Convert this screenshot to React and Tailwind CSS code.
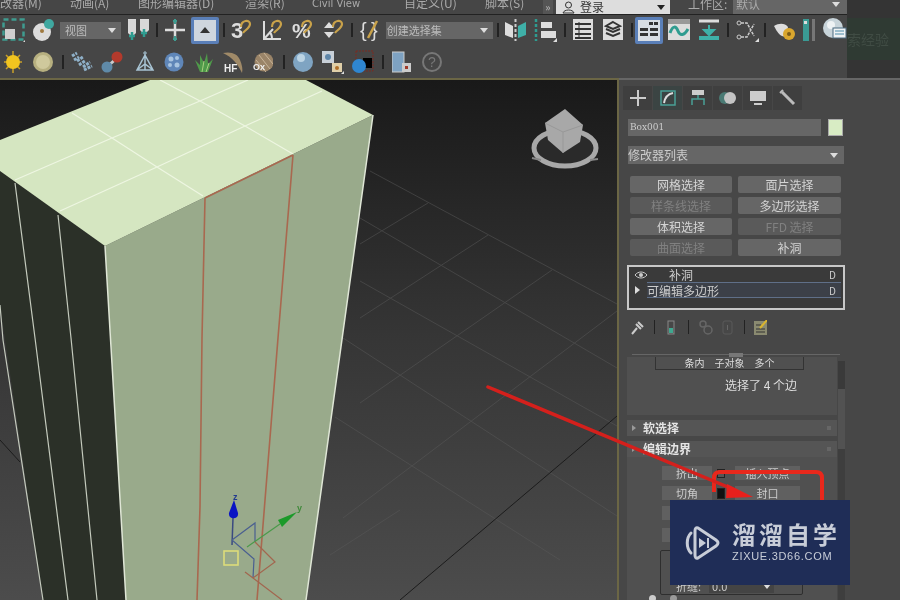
import React from 'react';

const Ico = ({ className = '', w = 22, h = 24, children }) => (
  <svg className={`shrink-0 ${className}`} width={w} height={h} viewBox={`0 0 ${w} ${h}`} fill="none">
    {children}
  </svg>
);

const Sep = ({ className = '' }) => <div className={`h-[14px] w-[2px] shrink-0 bg-[#222] ${className}`} />;

// small white corner shown on flyout buttons
const Fly = ({ x, y }) => <polygon points={`${x},${y} ${x},${y - 4} ${x - 4},${y}`} fill="#ddd" />;

const Magnet = ({ x = 12 }) => (
  <path d={`M${x} 9 C${x} 2 ${x + 9} 1 ${x + 9} 6 C${x + 9} 10 ${x + 4} 12 ${x + 2} 15`} stroke="#c9a24a" strokeWidth="2.2" />
);

const Arrow = ({ className = '' }) => <div className={`h-0 w-0 border-x-[4px] border-t-[5px] border-x-transparent border-t-[#ddd] ${className}`} />;

const ToolbarTop = () => (
  <div className="flex h-[30px] items-center">
    <Ico className="ml-[2px]" w={23}>
      <rect x="1.5" y="1.5" width="20" height="20" stroke="#3f9c90" strokeWidth="2.5" strokeDasharray="5 3" />
      <rect x="3" y="11" width="10" height="10" fill="#cfcfcf" />
      <Fly x={25} y={24} />
    </Ico>
    <Ico className="ml-[7px]" w={23}>
      <circle cx="10" cy="14" r="9" fill="#dcdcdc" />
      <circle cx="17" cy="6" r="5" fill="#3fa8a0" />
      <circle cx="10" cy="13" r="2" fill="#a07a40" />
    </Ico>
    <div className="ml-[5px] flex h-[17px] w-[63px] items-center justify-between bg-[#666] pl-[5px] pr-[5px] text-[11px] text-[#bbb]">
      <span>视图</span>
      <Arrow />
    </div>
    <Ico className="ml-[6px]" w={23}>
      <path d="M1 1H9V15L5 19L1 15Z" fill="#d8d8d8" />
      <path d="M13 1H22V12L17 17L13 12Z" fill="#d8d8d8" />
      <path d="M5 14V22M2 18H8M17 11V19M14 15H20" stroke="#2f9c90" strokeWidth="2.5" />
    </Ico>
    <Sep className="ml-[6px]" />
    <Ico className="ml-[6px]">
      <path d="M11 3V21M1 12H21" stroke="#ddd" strokeWidth="2.5" />
      <path d="M11 1V6M9 3H13M11 18V23M9 21H13" stroke="#3f9c90" strokeWidth="2" />
    </Ico>
    <div className="ml-[5px] flex h-[27px] w-[28px] shrink-0 items-center justify-center rounded-[2px] border-[3px] border-[#5a7fb8] bg-[#cfd6de]">
      <div className="h-0 w-0 border-x-[5px] border-b-[6px] border-x-transparent border-b-[#333]" />
    </div>
    <Sep className="ml-[4px]" />
    <Ico className="ml-[6px]">
      <text x="0" y="20" fontSize="22" fontWeight="700" fill="#ddd" fontFamily="Liberation Sans">3</text>
      <Magnet x={10} />
    </Ico>
    <Ico className="ml-[9px]" w={21}>
      <path d="M2 3V21H19M2 21L11 11M10 21C10 17 9 15 7 14" stroke="#ddd" strokeWidth="2" />
      <Magnet x={10} />
    </Ico>
    <Ico className="ml-[9px]">
      <text x="0" y="20" fontSize="21" fontWeight="700" fill="#ddd" fontFamily="Liberation Sans">%</text>
      <Magnet x={10} />
    </Ico>
    <Ico className="ml-[9px]">
      <path d="M1 10L6 4L11 10ZM1 14L6 20L11 14Z" fill="#ddd" />
      <Magnet x={10} />
    </Ico>
    <Sep className="ml-[6px]" />
    <Ico className="ml-[7px]" w={19}>
      <text x="0" y="19" fontSize="20" fill="#ddd" fontFamily="Liberation Sans">{'{'}</text>
      <text x="11" y="19" fontSize="20" fill="#ddd" fontFamily="Liberation Sans">{'}'}</text>
      <path d="M8 20L17 3" stroke="#c9a24a" strokeWidth="2.5" />
    </Ico>
    <div className="ml-[7px] flex h-[17px] w-[112px] items-center justify-between bg-[#666] pl-[1px] pr-[5px] text-[11px] text-[#bbb]">
      <span>创建选择集</span>
      <Arrow />
    </div>
    <Sep className="ml-[4px]" />
    <Ico className="ml-[5px]" w={23}>
      <path d="M1 4L9 8V20L1 17Z" fill="#ddd" />
      <path d="M14 8L22 4V17L14 20Z" fill="#3fb0a8" />
      <path d="M11.5 1V23" stroke="#ccc" strokeWidth="2" strokeDasharray="3 2" />
    </Ico>
    <Ico className="ml-[7px]" w={23}>
      <path d="M2 1V23" stroke="#2f9c90" strokeWidth="2.5" strokeDasharray="3 2" />
      <rect x="7" y="4" width="11" height="6" fill="#ddd" />
      <rect x="7" y="13" width="15" height="7" fill="#ddd" />
      <Fly x={23} y={24} />
    </Ico>
    <Sep className="ml-[7px]" />
    <Ico className="ml-[7px]" w={20}>
      <rect x="0" y="1" width="20" height="21" fill="#ddd" />
      <path d="M2 6H18M2 11H18M2 16H18M2 20H18" stroke="#333" strokeWidth="2" />
      <path d="M6 4V21" stroke="#333" strokeWidth="1" />
    </Ico>
    <Ico className="ml-[10px]" w={20}>
      <rect x="0" y="1" width="20" height="21" fill="#ddd" />
      <path d="M10 4L17 8L10 11L3 8ZM3 11L10 14L17 11M3 15L10 18L17 15" stroke="#333" strokeWidth="2" />
    </Ico>
    <Sep className="ml-[8px]" />
    <div className="ml-[2px] flex h-[27px] w-[28px] shrink-0 flex-col rounded-[2px] border-[3px] border-[#5a7fb8] bg-[#d8dde3] p-[2px]">
      <div className="flex justify-end gap-[1px]">
        <div className="h-[3px] w-[4px] bg-[#333]" />
        <div className="h-[3px] w-[4px] bg-[#333]" />
      </div>
      <div className="mt-[3px] grid grid-cols-2 gap-[2px]">
        <div className="h-[3px] bg-[#333]" />
        <div className="h-[3px] bg-[#333]" />
        <div className="h-[3px] bg-[#333]" />
        <div className="h-[3px] bg-[#333]" />
      </div>
    </div>
    <Ico className="ml-[5px]">
      <rect x="0" y="1" width="22" height="21" fill="#ddd" />
      <rect x="0" y="1" width="22" height="5" fill="#999" />
      <path d="M2 15C5 7 8 8 10 13C12 18 16 18 20 11" stroke="#2f9c90" strokeWidth="3" />
    </Ico>
    <Ico className="ml-[8px]">
      <path d="M1 3H21" stroke="#ddd" strokeWidth="3" />
      <path d="M1 20H21" stroke="#3fb0a8" strokeWidth="4" />
      <path d="M11 7V14M6 12H16L11 17Z" fill="#3fb0a8" stroke="#3fb0a8" strokeWidth="2" />
    </Ico>
    <Sep className="ml-[7px]" />
    <Ico className="ml-[7px]" w={23}>
      <circle cx="3" cy="5" r="2" stroke="#ccc" />
      <circle cx="3" cy="19" r="2" stroke="#ccc" />
      <path d="M5 5H11L18 18M5 19H11L18 6" stroke="#ccc" strokeWidth="1.5" strokeDasharray="3 1" />
      <Fly x={23} y={24} />
    </Ico>
    <Sep className="ml-[5px]" />
    <Ico className="ml-[7px]">
      <path d="M1 8C6 5 12 5 15 9L13 18C9 20 5 16 1 8Z" fill="#ddd" />
      <circle cx="16" cy="16" r="6" fill="#d9a62e" />
      <circle cx="16" cy="16" r="2" fill="#7a5c18" />
    </Ico>
    <Ico className="ml-[8px]" w={12}>
      <rect x="0" y="1" width="6" height="22" fill="#3a9a94" />
      <rect x="9" y="1" width="3" height="22" fill="#777" />
      <rect x="1" y="3" width="3" height="3" fill="#ddd" />
    </Ico>
    <Ico className="ml-[7px]" w={25} h={26}>
      <circle cx="11" cy="11" r="10" fill="#c8d4da" />
      <circle cx="9" cy="8" r="4" fill="#eef2f4" />
      <rect x="11" y="11" width="13" height="10" fill="#eef2f4" stroke="#4a6a80" />
      <path d="M13 14H22M13 17H22" stroke="#4a8aa8" />
    </Ico>
  </div>
);

const ToolbarBottom = () => (
  <div className="flex h-[33px] items-center">
    <Ico className="ml-[3px]" w={20}>
      <path d="M10 1V23M1 12H19M3 5L17 19M17 5L3 19" stroke="#c9a02a" strokeWidth="1.5" />
      <circle cx="10" cy="12" r="7" fill="#f1c41f" />
    </Ico>
    <Ico className="ml-[10px]" w={20}>
      <circle cx="10" cy="12" r="10" fill="#b7b080" />
      <circle cx="10" cy="12" r="7" fill="#cfc99c" />
    </Ico>
    <Sep className="ml-[9px]" />
    <Ico className="ml-[7px]">
      <path d="M1 6L6 3M6 11L12 7M12 17L19 12M3 10L8 7M8 15L14 11M13 20L21 16" stroke="#8fb0c8" strokeWidth="3" strokeDasharray="3 1" />
    </Ico>
    <Ico className="ml-[8px]">
      <path d="M7 16L16 8" stroke="#ccc" strokeWidth="3" />
      <circle cx="6" cy="17" r="5.5" fill="#5f8aa8" />
      <circle cx="16" cy="7" r="5.5" fill="#b33a2c" />
    </Ico>
    <Ico className="ml-[11px]">
      <path d="M11 5L3 20H19ZM11 5V20M3 20L11 14L19 20" stroke="#a8c4d4" strokeWidth="1.5" />
      <path d="M11 1V5M9 3H13" stroke="#a8c4d4" />
    </Ico>
    <Ico className="ml-[8px]" w={20}>
      <circle cx="10" cy="12" r="9.5" fill="#5f86b8" />
      <circle cx="7" cy="9" r="2.5" fill="#a8c4e0" />
      <circle cx="13" cy="8" r="2" fill="#a8c4e0" />
      <circle cx="13" cy="15" r="2.5" fill="#a8c4e0" />
      <circle cx="6" cy="15" r="2" fill="#a8c4e0" />
    </Ico>
    <Ico className="ml-[10px]" w={20}>
      <path d="M1 10L6 22H14L19 9L14 14L13 3L10 13L6 5L6 15Z" fill="#4f9a4a" />
      <path d="M8 22L10 11M12 22L15 13" stroke="#a8d080" />
    </Ico>
    <Ico className="ml-[9px]" w={21}>
      <path d="M0 3C8 1 15 4 17 10C19 15 20 19 19 23C15 14 9 7 0 3Z" fill="#a08a68" />
      <text x="1" y="22" fontSize="10" fontWeight="700" fill="#eee" fontFamily="Liberation Sans">HF</text>
    </Ico>
    <Ico className="ml-[9px]" w={20}>
      <circle cx="11" cy="12" r="9.5" fill="#9a8468" />
      <path d="M6 5L17 19M3 10L13 22M11 3L20 14" stroke="#c8b498" />
      <text x="0" y="20" fontSize="9" fontWeight="700" fill="#eee" fontFamily="Liberation Sans">Ox</text>
    </Ico>
    <Sep className="ml-[10px]" />
    <Ico className="ml-[8px]" w={20}>
      <circle cx="10" cy="12" r="10" fill="#7fa4c2" />
      <circle cx="8" cy="8" r="4" fill="#bcd4e4" />
    </Ico>
    <Ico className="ml-[9px]">
      <rect x="0" y="1" width="12" height="12" fill="#c8d0d8" />
      <circle cx="6" cy="7" r="3" fill="#5f86a8" />
      <rect x="10" y="13" width="10" height="9" fill="#e0cfa8" />
      <circle cx="15" cy="18" r="2" fill="#b0702a" />
      <Fly x={23} y={24} />
    </Ico>
    <Ico className="ml-[8px]">
      <rect x="4" y="1" width="17" height="20" stroke="#7a2a20" strokeDasharray="2 1" />
      <rect x="11" y="8" width="9" height="10" fill="#000" />
      <circle cx="7" cy="16" r="7" fill="#2f86d0" />
    </Ico>
    <Sep className="ml-[8px]" />
    <Ico className="ml-[8px]" w={20}>
      <rect x="0" y="2" width="12" height="20" fill="#7ea2c2" stroke="#ccc" />
      <rect x="10" y="13" width="9" height="9" fill="#ccc" />
      <rect x="13" y="16" width="3" height="3" fill="#a03a2a" />
    </Ico>
    <Ico className="ml-[10px]" w={20}>
      <circle cx="10" cy="12" r="9" stroke="#777" strokeWidth="2" />
      <text x="6" y="17" fontSize="14" fill="#777" fontFamily="Liberation Sans">?</text>
    </Ico>
  </div>
);

const Menu = () => (
  <div className="flex h-[15px] items-start overflow-hidden border-b border-[#222] text-[12px] leading-[12px] text-[#aaa]">
    <span className="-mt-[3px] w-[70px] shrink-0">改器(M)</span>
    <span className="-mt-[3px] w-[68px] shrink-0">动画(A)</span>
    <span className="-mt-[3px] w-[107px] shrink-0">图形编辑器(D)</span>
    <span className="-mt-[3px] w-[67px] shrink-0">渲染(R)</span>
    <span className="-mt-[2px] w-[92px] shrink-0 font-['DejaVu_Sans',sans-serif] text-[10px]">Civil View</span>
    <span className="-mt-[3px] w-[81px] shrink-0">自定义(U)</span>
    <span className="-mt-[3px] w-[58px] shrink-0">脚本(S)</span>
    <div className="flex h-[14px] w-[10px] shrink-0 items-center justify-center bg-[#555] text-[10px] font-bold">»</div>
    <div className="ml-[3px] flex h-[14px] w-[114px] shrink-0 items-center bg-[#ddd] pl-[6px] text-[#333]">
      <Ico w={13} h={13}>
        <circle cx="6.5" cy="4" r="3" stroke="#333" />
        <path d="M1 12C2 8 11 8 12 12Z" stroke="#333" />
      </Ico>
      <span className="ml-[5px]">登录</span>
      <div className="ml-auto mr-[5px] h-0 w-0 border-x-[4px] border-t-[5px] border-x-transparent border-t-[#222]" />
    </div>
    <span className="-mt-[2px] ml-[18px] w-[45px] shrink-0">工作区:</span>
    <div className="flex h-[14px] w-[114px] shrink-0 items-start justify-between bg-[#666] pl-[3px] pr-[7px]">
      <span className="-mt-[2px]">默认</span>
      <Arrow className="mt-[2px]" />
    </div>
  </div>
);

const Viewport = () => (
  <div className="h-[522px] w-[619px] shrink-0 border-r-2 border-t-2 border-[#6b6645]">
    <svg className="block" width="617" height="520" viewBox="0 80 617 520" fill="none">
      <defs>
        <linearGradient id="bg" x1="0" y1="0" x2="0" y2="1">
          <stop offset="0" stopColor="#191919" />
          <stop offset="0.5" stopColor="#363636" />
          <stop offset="1" stopColor="#4c4c4c" />
        </linearGradient>
      </defs>
      <rect x="0" y="80" width="617" height="520" fill="url(#bg)" />

      {/* grid */}
      <g stroke="#5a5a5a" strokeWidth="1" opacity="0.5">
        <path d="M370 171L617 304M360 218L617 368M360 281L617 426M343 338L617 516M335 417L560 560" />
        <path d="M360 244L428 203M360 318L488 235M360 403L552 270M343 518L617 311M330 555L400 510" />
      </g>
      <path d="M400 600L617 416M0 440L20 462" stroke="#1c1c1c" strokeWidth="1" />

      {/* box */}
      <polygon points="0,171 105,246 126,600 43,600 0,305" fill="#2b3028" />
      <path d="M0 305L3 340L43 600M15 183L35 338L68 600M58 215L71 338L97 600" stroke="#c4cabd" strokeWidth="1.2" />
      <polygon points="105,246 373,115 306,600 126,600" fill="#99aa8b" />
      <polygon points="0,140 150,80 306,80 373,115 105,246 0,171" fill="#d5e6c1" />
      <path d="M15 180L112 138L200 101L248 80M60 211L157 167L245 126L322 91M72 113L112 138L157 167L203 196M160 80L200 101L245 126L293 154" stroke="#eef6e2" strokeWidth="1.2" />
      <path d="M105 246L126 600M373 115L306 600" stroke="#dfe6d6" strokeWidth="1.5" />
      <path d="M205 198L202 338L200 507L197 600M293 155L278 338L257 600M205 198L293 155" stroke="#a9684f" strokeWidth="1.6" />

      {/* gizmo */}
      <path d="M233 518L232 545" stroke="#3a4a80" strokeWidth="1.5" />
      <path d="M234 500L229 513C228 520 239 520 238 513Z" fill="#0a14c4" />
      <text x="233" y="500" fontSize="9" fontWeight="700" fill="#223a90" fontFamily="Liberation Sans">z</text>
      <path d="M232 540L255 523V542M232 540L254 559L253 578" stroke="#4a5f90" strokeWidth="1.2" />
      <path d="M247 547L280 524" stroke="#4a9a4a" strokeWidth="1.2" />
      <polygon points="297,512 278,520 282,527" fill="#1c9a2a" />
      <text x="297" y="511" fontSize="9" fontWeight="700" fill="#3f8a3a" fontFamily="Liberation Sans">y</text>
      <path d="M255 542L275 562L253 578L245 572M253 578L282 600" stroke="#a2664f" strokeWidth="1.2" />
      <rect x="224" y="551" width="14" height="14" stroke="#dcdc7a" strokeWidth="1.6" />

      {/* view cube */}
      <ellipse cx="565" cy="148" rx="31" ry="18" stroke="#a8a8a8" strokeWidth="5" fill="#2a2a2a" />
      <path d="M532 158L541 160M590 160L598 159" stroke="#888" strokeWidth="2" />
      <polygon points="565,109 583,125 580,142 563,153 548,140 545,123" fill="#a8a8a8" />
      <path d="M545 123L563 132L583 125M563 132V153" stroke="#989898" />
    </svg>
  </div>
);

const btnRows = [
  ['网格选择', false],
  ['面片选择', false],
  ['样条线选择', true],
  ['多边形选择', false],
  ['体积选择', false],
  ['FFD 选择', true],
  ['曲面选择', true],
  ['补洞', false],
];

const Tabs = () => (
  <div className="ml-[4px] mt-[6px] flex h-[24px] gap-[1px]">
    <div className="flex w-[29px] items-center justify-center bg-[#3f3f3f]">
      <Ico w={18} h={18}><path d="M9 1V17M1 9H17" stroke="#ccc" strokeWidth="2" /></Ico>
    </div>
    <div className="flex w-[29px] items-center justify-center bg-[#3b4443]">
      <Ico w={18} h={18}>
        <rect x="2" y="2" width="14" height="14" stroke="#4aa096" strokeWidth="1.5" />
        <path d="M5 14C6 8 9 5 14 4" stroke="#ddd" strokeWidth="2" />
      </Ico>
    </div>
    <div className="flex w-[29px] items-center justify-center bg-[#3f3f3f]">
      <Ico w={18} h={18}>
        <rect x="3" y="1" width="12" height="5" fill="#ccc" />
        <path d="M9 6V10M3 16V10H15V16" stroke="#4aa096" strokeWidth="1.5" />
      </Ico>
    </div>
    <div className="flex w-[29px] items-center justify-center bg-[#3f3f3f]">
      <Ico w={20} h={16}>
        <circle cx="7" cy="8" r="6" fill="#4a7a74" />
        <circle cx="12" cy="8" r="6" fill="#c4c4c4" />
      </Ico>
    </div>
    <div className="flex w-[29px] items-center justify-center bg-[#3f3f3f]">
      <Ico w={18} h={16}>
        <rect x="1" y="1" width="16" height="10" fill="#ccc" />
        <path d="M5 14H13" stroke="#ccc" strokeWidth="2" />
      </Ico>
    </div>
    <div className="flex w-[29px] items-center justify-center bg-[#3f3f3f]">
      <Ico w={18} h={18}>
        <path d="M3 3L15 15" stroke="#bbb" strokeWidth="3" />
        <path d="M1 4L4 1" stroke="#bbb" strokeWidth="2" />
      </Ico>
    </div>
  </div>
);

const Stack = () => (
  <div className="ml-[8px] mt-[9px] h-[45px] w-[218px] border-2 border-[#c8c8c8] bg-[#3a3a3a] text-[12px] leading-[15px] text-[#ccc]">
    <div className="flex h-[15px] items-center">
      <Ico className="ml-[5px]" w={14} h={10}>
        <path d="M1 5C4 1 10 1 13 5C10 9 4 9 1 5Z" stroke="#ccc" />
        <circle cx="7" cy="5" r="2" fill="#ccc" />
      </Ico>
      <span className="ml-[21px]">补洞</span>
      <span className="ml-auto mr-[7px] text-[10px]">D</span>
    </div>
    <div className="flex h-[16px] items-center">
      <div className="ml-[6px] h-0 w-0 border-y-[4px] border-l-[5px] border-y-transparent border-l-[#ddd]" />
      <div className="ml-[7px] mr-[2px] flex h-[16px] flex-1 items-center border-y border-[#5f6f88] bg-[#3c4048] pr-[5px]">
        <span>可编辑多边形</span>
        <span className="ml-auto text-[10px]">D</span>
      </div>
    </div>
  </div>
);

const StackTools = () => (
  <div className="ml-[12px] mt-[9px] flex h-[16px] items-center">
    <Ico w={14} h={15}>
      <path d="M1 14L6 8M5 4L10 9M7 2L12 7" stroke="#ccc" strokeWidth="2" />
    </Ico>
    <Sep className="ml-[9px] !w-[1px]" />
    <Ico className="ml-[12px]" w={8} h={15}>
      <rect x="1" y="1" width="6" height="13" stroke="#888" />
      <rect x="2" y="8" width="4" height="5" fill="#3fa890" />
    </Ico>
    <Sep className="ml-[13px] !w-[1px]" />
    <Ico className="ml-[9px]" w={15} h={15}>
      <circle cx="5" cy="4" r="3" stroke="#666" strokeWidth="1.5" />
      <circle cx="10" cy="10" r="4" stroke="#666" strokeWidth="1.5" />
    </Ico>
    <Ico className="ml-[9px]" w={11} h={15}>
      <rect x="1" y="1" width="9" height="13" rx="2" stroke="#5a5a5a" />
      <path d="M5.5 5V10" stroke="#666" />
    </Ico>
    <Sep className="ml-[11px] !w-[1px]" />
    <Ico className="ml-[9px]" w={13} h={15}>
      <rect x="0" y="1" width="13" height="14" fill="#8a8a70" />
      <path d="M2 5H7M2 9H11M2 12H11" stroke="#333" />
      <path d="M6 8L13 0" stroke="#d9b52e" strokeWidth="2" />
    </Ico>
  </div>
);

const Header = ({ label, className = '' }) => (
  <div className={`flex h-[16px] shrink-0 items-center bg-[#555] text-[12px] font-bold text-[#e4e4e4] ${className}`}>
    <div className="ml-[5px] h-0 w-0 border-y-[3px] border-l-[4px] border-y-transparent border-l-[#999]" />
    <span className="ml-[7px]">{label}</span>
    <div className="ml-auto mr-[6px] h-[4px] w-[4px] bg-[#666]" />
  </div>
);

const SmallBtn = ({ label, className = '' }) => (
  <div className={`flex h-[14px] items-center justify-center overflow-hidden bg-[#606060] text-[11px] text-[#ccc] ${className}`}>{label}</div>
);

const Rollouts = () => (
  <div className="flex min-h-0 flex-1">
    <div className="ml-[8px] flex w-[210px] shrink-0 flex-col">
      <div className="h-[58px] shrink-0 overflow-hidden bg-[#505050] text-[11px] text-[#ddd]">
        <div className="ml-[28px] flex h-[13px] w-[149px] items-end justify-center gap-[10px] overflow-hidden border-x border-b border-[#333] text-[10px] leading-[10px]">
          <span className="mb-[1px]">条内</span>
          <span className="mb-[1px]">子对象</span>
          <span className="mb-[1px]">多个</span>
        </div>
        <div className="ml-[98px] mt-[6px] text-[12px]">选择了 4 个边</div>
      </div>
      <Header label="软选择" className="mt-[5px]" />
      <Header label="编辑边界" className="mt-[5px]" />
      <div className="min-h-0 flex-1 bg-[#505050] pt-[9px]">
        <div className="flex items-center">
          <SmallBtn label="挤出" className="ml-[35px] w-[50px]" />
          <div className="ml-[5px] h-[9px] w-[8px] border border-[#222] bg-[#555]" />
          <SmallBtn label="插入顶点" className="ml-[10px] w-[65px]" />
        </div>
        <div className="mt-[6px] flex items-center">
          <SmallBtn label="切角" className="ml-[35px] w-[50px]" />
          <div className="ml-[5px] h-[11px] w-[8px] border border-[#222] bg-[#111]" />
          <SmallBtn label="封口" className="ml-[10px] w-[65px]" />
        </div>
        <SmallBtn label="" className="ml-[35px] mt-[6px] w-[50px]" />
        <SmallBtn label="" className="ml-[35px] mt-[8px] w-[50px]" />
        <div className="ml-[33px] mt-[8px] h-[45px] w-[143px] rounded-[2px] border border-[#2e2e2e]">
          <div className="ml-[15px] mt-[27px] flex items-center text-[11px] text-[#ccc]">
            <span>折缝:</span>
            <div className="ml-[8px] flex h-[13px] w-[65px] items-center justify-between bg-[#444] px-[3px]">
              <span>0.0</span>
              <Arrow />
            </div>
          </div>
        </div>
        <div className="ml-[22px] flex gap-[14px]">
          <div className="h-[7px] w-[7px] rounded-full bg-[#ccc]" />
          <div className="h-[7px] w-[7px] rounded-full bg-[#999]" />
        </div>
      </div>
    </div>
    <div className="ml-[1px] flex w-[7px] flex-col">
      <div className="mt-[4px] h-[28px] bg-[#3a3a3a]" />
      <div className="h-[60px] bg-[#525252]" />
      <div className="flex-1 bg-[#3e3e3e]" />
    </div>
  </div>
);

const Panel = () => (
  <div className="flex h-[522px] flex-1 flex-col border-t-2 border-[#666] bg-[#474747] font-['Noto_Sans_CJK_SC',sans-serif]">
    <Tabs />
    <div className="ml-[9px] mt-[9px] flex">
      <div className="flex h-[17px] w-[193px] items-center bg-[#666] pl-[2px] font-['DejaVu_Serif',serif] text-[9px] text-[#ccc]">Box001</div>
      <div className="ml-[7px] h-[17px] w-[15px] border border-[#aaa] bg-[#d8ecc4]" />
    </div>
    <div className="ml-[9px] mt-[10px] flex h-[18px] w-[216px] items-center justify-between bg-[#666] pr-[6px] text-[12px] text-[#ccc]">
      <span>修改器列表</span>
      <Arrow />
    </div>
    <div className="ml-[11px] mt-[12px] grid w-[211px] grid-cols-[102px_103px] gap-x-[6px] gap-y-[4px]">
      {btnRows.map(([label, off]) => (
        <div
          key={label}
          className={off
            ? 'flex h-[17px] items-center justify-center rounded-[2px] bg-[#5a5a5a] text-[12px] text-[#808080]'
            : 'flex h-[17px] items-center justify-center rounded-[2px] bg-[#666] text-[12px] text-[#d4d4d4]'}
        >
          {label}
        </div>
      ))}
    </div>
    <Stack />
    <StackTools />
    <div className="ml-[13px] mt-[17px] flex h-[5px] w-[208px] items-center">
      <div className="h-[1px] flex-1 bg-[#666]" />
      <div className="h-[4px] w-[14px] bg-[#777]" />
      <div className="h-[1px] flex-1 bg-[#666]" />
    </div>
    <Rollouts />
  </div>
);

export default function App() {
  return (
    <div className="relative h-[600px] w-[900px] overflow-hidden bg-[#474747] blur-[0.4px] font-['Noto_Sans_CJK_SC',sans-serif]">
      <div className="flex h-[78px]">
        <div className="w-[847px] shrink-0 bg-[#464646]">
          <Menu />
          <ToolbarTop />
          <ToolbarBottom />
        </div>
        <div className="flex-1 bg-[#343434] pt-[18px]">
          <div className="flex h-[42px] items-center overflow-hidden bg-[#2f3a33] text-[14px] text-[#404c44]">索经验</div>
        </div>
      </div>
      <div className="flex">
        <Viewport />
        <Panel />
      </div>

      {/* red annotation over the screenshot */}
      <svg className="absolute left-0 top-0" width="900" height="600" viewBox="0 0 900 600" fill="none">
        <path d="M714 492V478Q714 472 720 472H816Q822 472 822 478V505" stroke="#e8281c" strokeWidth="4" />
        <path d="M488 387L735 490" stroke="#d4201c" strokeWidth="3.5" strokeLinecap="round" />
        <polygon points="727,484 753,497 726,498" fill="#e8201c" />
      </svg>

      {/* watermark */}
      <div className="absolute left-[670px] top-[500px] flex h-[85px] w-[180px] items-center bg-[#1f2d57] pl-[15px] text-[#c8cdd8]">
        <Ico w={35} h={36}>
          <path d="M6 8C1 13 1 23 6 28" stroke="#c8cdd8" strokeWidth="3" strokeLinecap="round" />
          <path d="M13 3L31 15Q35 18 31 21L13 33Q10 34 10 30V6Q10 2 13 3Z" stroke="#c8cdd8" strokeWidth="3" />
          <path d="M14 13L21 18L14 23Z" fill="#c8cdd8" />
          <rect x="22" y="13" width="2" height="10" fill="#c8cdd8" />
        </Ico>
        <div className="-mt-[4px] ml-[12px] flex flex-col">
          <span className="text-[24px] font-bold leading-[28px] tracking-[3px]">溜溜自学</span>
          <span className="mt-[2px] font-['Liberation_Sans',sans-serif] text-[11px] leading-[12px] tracking-[0.7px]">ZIXUE.3D66.COM</span>
        </div>
      </div>
    </div>
  );
}
